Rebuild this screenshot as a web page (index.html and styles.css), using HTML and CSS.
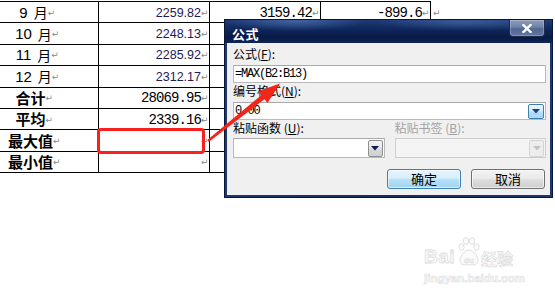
FILE: index.html
```html
<!DOCTYPE html>
<html lang="zh-CN">
<head>
<meta charset="utf-8">
<link rel="stylesheet" href="styles.css">
</head>
<body>
<div class="doc">
  <div class="row r1">
    <div class="c c1"><span class="n">9</span>月<span class="pm">↵</span></div>
    <div class="c c2"><span class="ta">2259.82</span><span class="pm">↵</span></div>
    <div class="c c3"><span class="ss">3159.42</span><span class="pm">↵</span></div>
    <div class="c c4"><span class="ss">-899.6</span><span class="pm">↵</span></div>
    <div class="endmark"><span class="pm">↵</span></div>
  </div>
  <div class="row">
    <div class="c c1"><span class="n">10</span>月<span class="pm">↵</span></div>
    <div class="c c2"><span class="ta">2248.13</span><span class="pm">↵</span></div>
    <div class="c c3"></div>
    <div class="c c4"></div>
  </div>
  <div class="row">
    <div class="c c1"><span class="n">11</span>月<span class="pm">↵</span></div>
    <div class="c c2"><span class="ta">2285.92</span><span class="pm">↵</span></div>
    <div class="c c3"></div>
    <div class="c c4"></div>
  </div>
  <div class="row">
    <div class="c c1"><span class="n">12</span>月<span class="pm">↵</span></div>
    <div class="c c2"><span class="ta">2312.17</span><span class="pm">↵</span></div>
    <div class="c c3"></div>
    <div class="c c4"></div>
  </div>
  <div class="row">
    <div class="c c1 b">合计<span class="pm">↵</span></div>
    <div class="c c2"><span class="ss">28069.95</span><span class="pm">↵</span></div>
    <div class="c c3"></div>
    <div class="c c4"></div>
  </div>
  <div class="row">
    <div class="c c1 b">平均<span class="pm">↵</span></div>
    <div class="c c2"><span class="ss">2339.16</span><span class="pm">↵</span></div>
    <div class="c c3"></div>
    <div class="c c4"></div>
  </div>
  <div class="row">
    <div class="c c1 b">最大值<span class="pm">↵</span></div>
    <div class="c c2"><span class="pm">↵</span></div>
    <div class="c c3"></div>
    <div class="c c4"></div>
  </div>
  <div class="row">
    <div class="c c1 b">最小值<span class="pm">↵</span></div>
    <div class="c c2"><span class="pm">↵</span></div>
    <div class="c c3"></div>
    <div class="c c4"></div>
  </div>
</div>

<div class="dialog">
  <div class="titlebar">
    <span class="title">公式</span>
    <span class="close"><svg width="10" height="9" viewBox="0 0 10 9"><path d="M1.5 1 L8.5 8 M8.5 1 L1.5 8" stroke="#fff" stroke-width="2.4" stroke-linecap="square"/></svg></span>
  </div>
  <div class="dbody">
    <div class="lbl">公式(<u>F</u>):</div>
    <div class="field formula">=MAX(B2:B13)</div>
    <div class="lbl l2">编号格式(<u>N</u>):</div>
    <div class="field combo"><span class="val">0.00</span><span class="ddbtn blue"><svg width="8" height="5" viewBox="0 0 8 5"><path d="M0 0 H8 L4 4.5 Z" fill="#1f3f7a"/></svg></span></div>
    <div class="pair">
      <div class="col">
        <div class="lbl">粘贴函数 (<u>U</u>):</div>
        <div class="field combo tall"><span class="val"></span><span class="ddbtn gray"><svg width="8" height="5" viewBox="0 0 8 5"><path d="M0 0 H8 L4 4.5 Z" fill="#0d1d55"/></svg></span></div>
      </div>
      <div class="col off">
        <div class="lbl">粘贴书签 (<u>B</u>):</div>
        <div class="field combo tall"><span class="val"></span><span class="ddbtn dis"><svg width="8" height="5" viewBox="0 0 8 5"><path d="M0 0 H8 L4 4.5 Z" fill="#c4c4c4"/></svg></span></div>
      </div>
    </div>
    <div class="btns">
      <button class="btn ok">确定</button>
      <button class="btn cancel">取消</button>
    </div>
  </div>
</div>

<div class="redbox"></div>
<svg class="arrow" width="555" height="298" viewBox="0 0 555 298">
  <polygon points="207.3,140.1 261.2,95.2 258.1,91.3 280,83.5 267.5,103.1 264.4,99.2 208.7,141.9" fill="#f0261b"/>
</svg>

<div class="wm">
  <div class="wm-top">
    <span class="wm-bai">Bai</span>
    <svg class="paw" width="22" height="30" viewBox="0 0 22 30">
      <g fill="#fbfbfb" stroke="#dedede" stroke-width="1">
        <ellipse cx="3.5" cy="10" rx="2.6" ry="3.4"/>
        <ellipse cx="8" cy="4" rx="2.6" ry="3.4"/>
        <ellipse cx="14" cy="4" rx="2.6" ry="3.4"/>
        <ellipse cx="18.5" cy="10" rx="2.6" ry="3.4"/>
        <path d="M11 13 C6 13 1.5 20 2 24 C2.5 28 7 28.5 11 27.5 C15 28.5 19.5 28 20 24 C20.5 20 16 13 11 13 Z"/>
      </g>
      <text x="11" y="25.5" text-anchor="middle" font-family="Liberation Sans" font-weight="700" font-size="8" fill="#fbfbfb" stroke="#dedede" stroke-width="0.6">du</text>
    </svg>
    <span class="wm-jy">经验</span>
  </div>
  <div class="wm-url">jingyan.baidu.com</div>
</div>
</body>
</html>
```
FILE: styles.css
```css
html, body {
  margin: 0;
  padding: 0;
}
body {
  width: 555px;
  height: 298px;
  overflow: hidden;
  position: relative;
  background: #fff;
  color: #000;
  font-family: "Noto Sans CJK SC", sans-serif;
}

/* ---------- Word table ---------- */
.doc {
  padding-top: 1px;
}
.row {
  display: flex;
  height: 21.4px;
}
.row.r1 {
  height: 22.4px;
}
.c {
  box-sizing: border-box;
  display: flex;
  align-items: center;
  border-bottom: 1px solid #000;
  border-right: 1px solid #000;
  line-height: 16px;
  white-space: nowrap;
}
.r1 .c {
  border-top: 1px solid #000;
}
.c1 {
  width: 99px;
  justify-content: center;
  padding-right: 24px;
  font-size: 14px;
}
.c1 .n {
  font-family: "Liberation Sans", sans-serif;
  font-size: 15px;
  font-weight: 400;
  margin-right: 6px;
  padding-top: 1px;
}
.c1.b {
  font-weight: 700;
  font-size: 15px;
  padding-right: 30px;
}
.c2 {
  width: 111px;
  justify-content: flex-end;
  padding-right: 1px;
}
.c3 {
  width: 111px;
  justify-content: flex-end;
  padding-right: 1px;
}
.c4 {
  width: 110px;
  justify-content: flex-end;
  padding-right: 1px;
}
.endmark {
  display: flex;
  align-items: center;
  padding-left: 2px;
  padding-top: 1px;
}
.pm {
  display: inline-block;
  width: 7px;
  font-family: "DejaVu Sans", sans-serif;
  font-size: 9px;
  font-weight: 400;
  line-height: 9px;
  color: #8a8a8a;
  padding-top: 2px;
}
.ta {
  font-family: "Liberation Sans", sans-serif;
  font-size: 12.5px;
  color: #221a55;
  padding-top: 1px;
}
.ss {
  font-family: "Liberation Mono", monospace;
  font-size: 14px;
  letter-spacing: -0.9px;
  padding-top: 1px;
}

/* ---------- dialog window ---------- */
.dialog {
  position: absolute;
  left: 224px;
  top: 19px;
  width: 329px;
  height: 179px;
  box-sizing: border-box;
  border: 1px solid #0a1633;
  background: linear-gradient(90deg, #1d3870, #152d60 50%, #1d3870);
  padding: 0 2px 2px;
  display: flex;
  flex-direction: column;
}
.titlebar {
  height: 23px;
  margin: 0 -2px;
  padding-left: 7px;
  display: flex;
  justify-content: space-between;
  align-items: flex-start;
  background:
    radial-gradient(ellipse 70px 10px at 70px 1px, rgba(100, 140, 210, 0.5), transparent),
    radial-gradient(ellipse 90px 9px at 240px 2px, rgba(100, 140, 210, 0.4), transparent),
    linear-gradient(#1f3b75 0%, #0f275b 40%, #081a45 75%, #0f2657 100%);
}
.title {
  color: #fff;
  font-size: 13px;
  font-weight: 700;
  line-height: 15px;
  padding-top: 6px;
  letter-spacing: 0.5px;
}
.close {
  box-sizing: border-box;
  width: 36px;
  height: 17px;
  margin-right: 7px;
  display: flex;
  align-items: center;
  justify-content: center;
  border: 1px solid #1d2c4e;
  border-top: 0;
  border-radius: 0 0 4px 4px;
  background: linear-gradient(#8d9dba 0%, #6e82a6 45%, #526891 55%, #5f76a0 100%);
  box-shadow: inset 0 0 0 1px rgba(255, 255, 255, 0.22);
}
.dbody {
  flex: 1;
  background: #f0f0f0;
  padding: 4px 4px 0 6px;
  display: flex;
  flex-direction: column;
  font-size: 12px;
  line-height: 14px;
}
.lbl {
  height: 14px;
  white-space: nowrap;
}
.lbl u {
  text-decoration: underline;
  text-underline-offset: 1px;
}
.l2 {
  margin-top: 1px;
}
.field {
  box-sizing: border-box;
  height: 18px;
  margin-top: 4px;
  background: #fff;
  border: 1px solid #b9b9b9;
  border-top-color: #a9a9a9;
  display: flex;
  align-items: center;
}
.formula {
  padding-left: 1px;
  font-family: "Liberation Mono", monospace;
  font-size: 12px;
  letter-spacing: -1.2px;
}
.combo {
  justify-content: space-between;
  padding: 0 1px 0 1px;
}
.combo .val {
  font-family: "Liberation Mono", monospace;
  font-size: 12px;
  letter-spacing: -1px;
}
.ddbtn {
  box-sizing: border-box;
  width: 16px;
  height: 15px;
  display: flex;
  align-items: center;
  justify-content: center;
  border-radius: 2px;
}
.ddbtn.blue {
  border: 1px solid #3c7fb1;
  background: linear-gradient(#eaf6fd 0%, #d3ecfb 45%, #b4dcf6 55%, #a9d6f5 100%);
}
.ddbtn.gray {
  width: 15px;
  height: 17px;
  border: 1px solid #8e8f8f;
  background: linear-gradient(#f4f4f4 0%, #e6e6e6 45%, #d8d8d8 55%, #cfcfcf 100%);
}
.ddbtn.dis {
  width: 15px;
  height: 17px;
  border: 1px solid #d3d3d3;
  background: #ededed;
}
.pair {
  display: grid;
  grid-template-columns: 1fr 1fr;
  column-gap: 10px;
  margin-top: 1px;
}
.col .field {
  margin-top: 3px;
}
.field.tall {
  height: 20px;
}
.off .lbl {
  color: #a3a3a3;
}
.off .field {
  background: #f4f4f4;
  border-color: #cdcdcd;
}
.btns {
  display: flex;
  justify-content: flex-end;
  gap: 10px;
  margin-top: 11px;
  margin-right: 1px;
}
.btn {
  box-sizing: border-box;
  width: 74px;
  height: 20px;
  padding: 0;
  border-radius: 3px;
  font-family: "Noto Sans CJK SC", sans-serif;
  font-size: 13px;
  line-height: 18px;
  color: #000;
}
.btn.ok {
  border: 1px solid #3c7fb1;
  background: linear-gradient(#e8f5fd 0%, #d5eefc 45%, #b5dff8 55%, #a2d4f4 100%);
  box-shadow: inset 0 0 0 1px rgba(255, 255, 255, 0.6);
}
.btn.cancel {
  border: 1px solid #707070;
  background: linear-gradient(#f2f2f2 0%, #ebebeb 45%, #dddddd 55%, #cfcfcf 100%);
  box-shadow: inset 0 0 0 1px rgba(255, 255, 255, 0.6);
}

/* ---------- annotations ---------- */
.redbox {
  position: absolute;
  left: 97px;
  top: 128px;
  width: 108px;
  height: 26px;
  box-sizing: border-box;
  border: 3px solid #fb2020;
  border-radius: 4px;
}
.arrow {
  position: absolute;
  left: 0;
  top: 0;
}

/* ---------- watermark ---------- */
.wm {
  position: absolute;
  left: 424px;
  top: 236px;
  display: flex;
  flex-direction: column;
}
.wm-top {
  display: flex;
  align-items: flex-end;
  height: 31px;
}
.wm-bai {
  font-family: "Liberation Sans", sans-serif;
  font-weight: 700;
  font-size: 19px;
  line-height: 19px;
  color: #fbfbfb;
  -webkit-text-stroke: 0.8px #dcdcdc;
  letter-spacing: 0.5px;
  margin-bottom: 1px;
}
.paw {
  margin-left: 3px;
}
.wm-jy {
  font-size: 16px;
  line-height: 18px;
  font-weight: 700;
  color: #fbfbfb;
  -webkit-text-stroke: 0.7px #dcdcdc;
  margin-left: 1px;
}
.wm-url {
  font-family: "Liberation Sans", sans-serif;
  font-weight: 700;
  font-size: 11.5px;
  line-height: 14px;
  color: #fbfbfb;
  -webkit-text-stroke: 0.6px #e0e0e0;
  margin-top: 4px;
}
```
